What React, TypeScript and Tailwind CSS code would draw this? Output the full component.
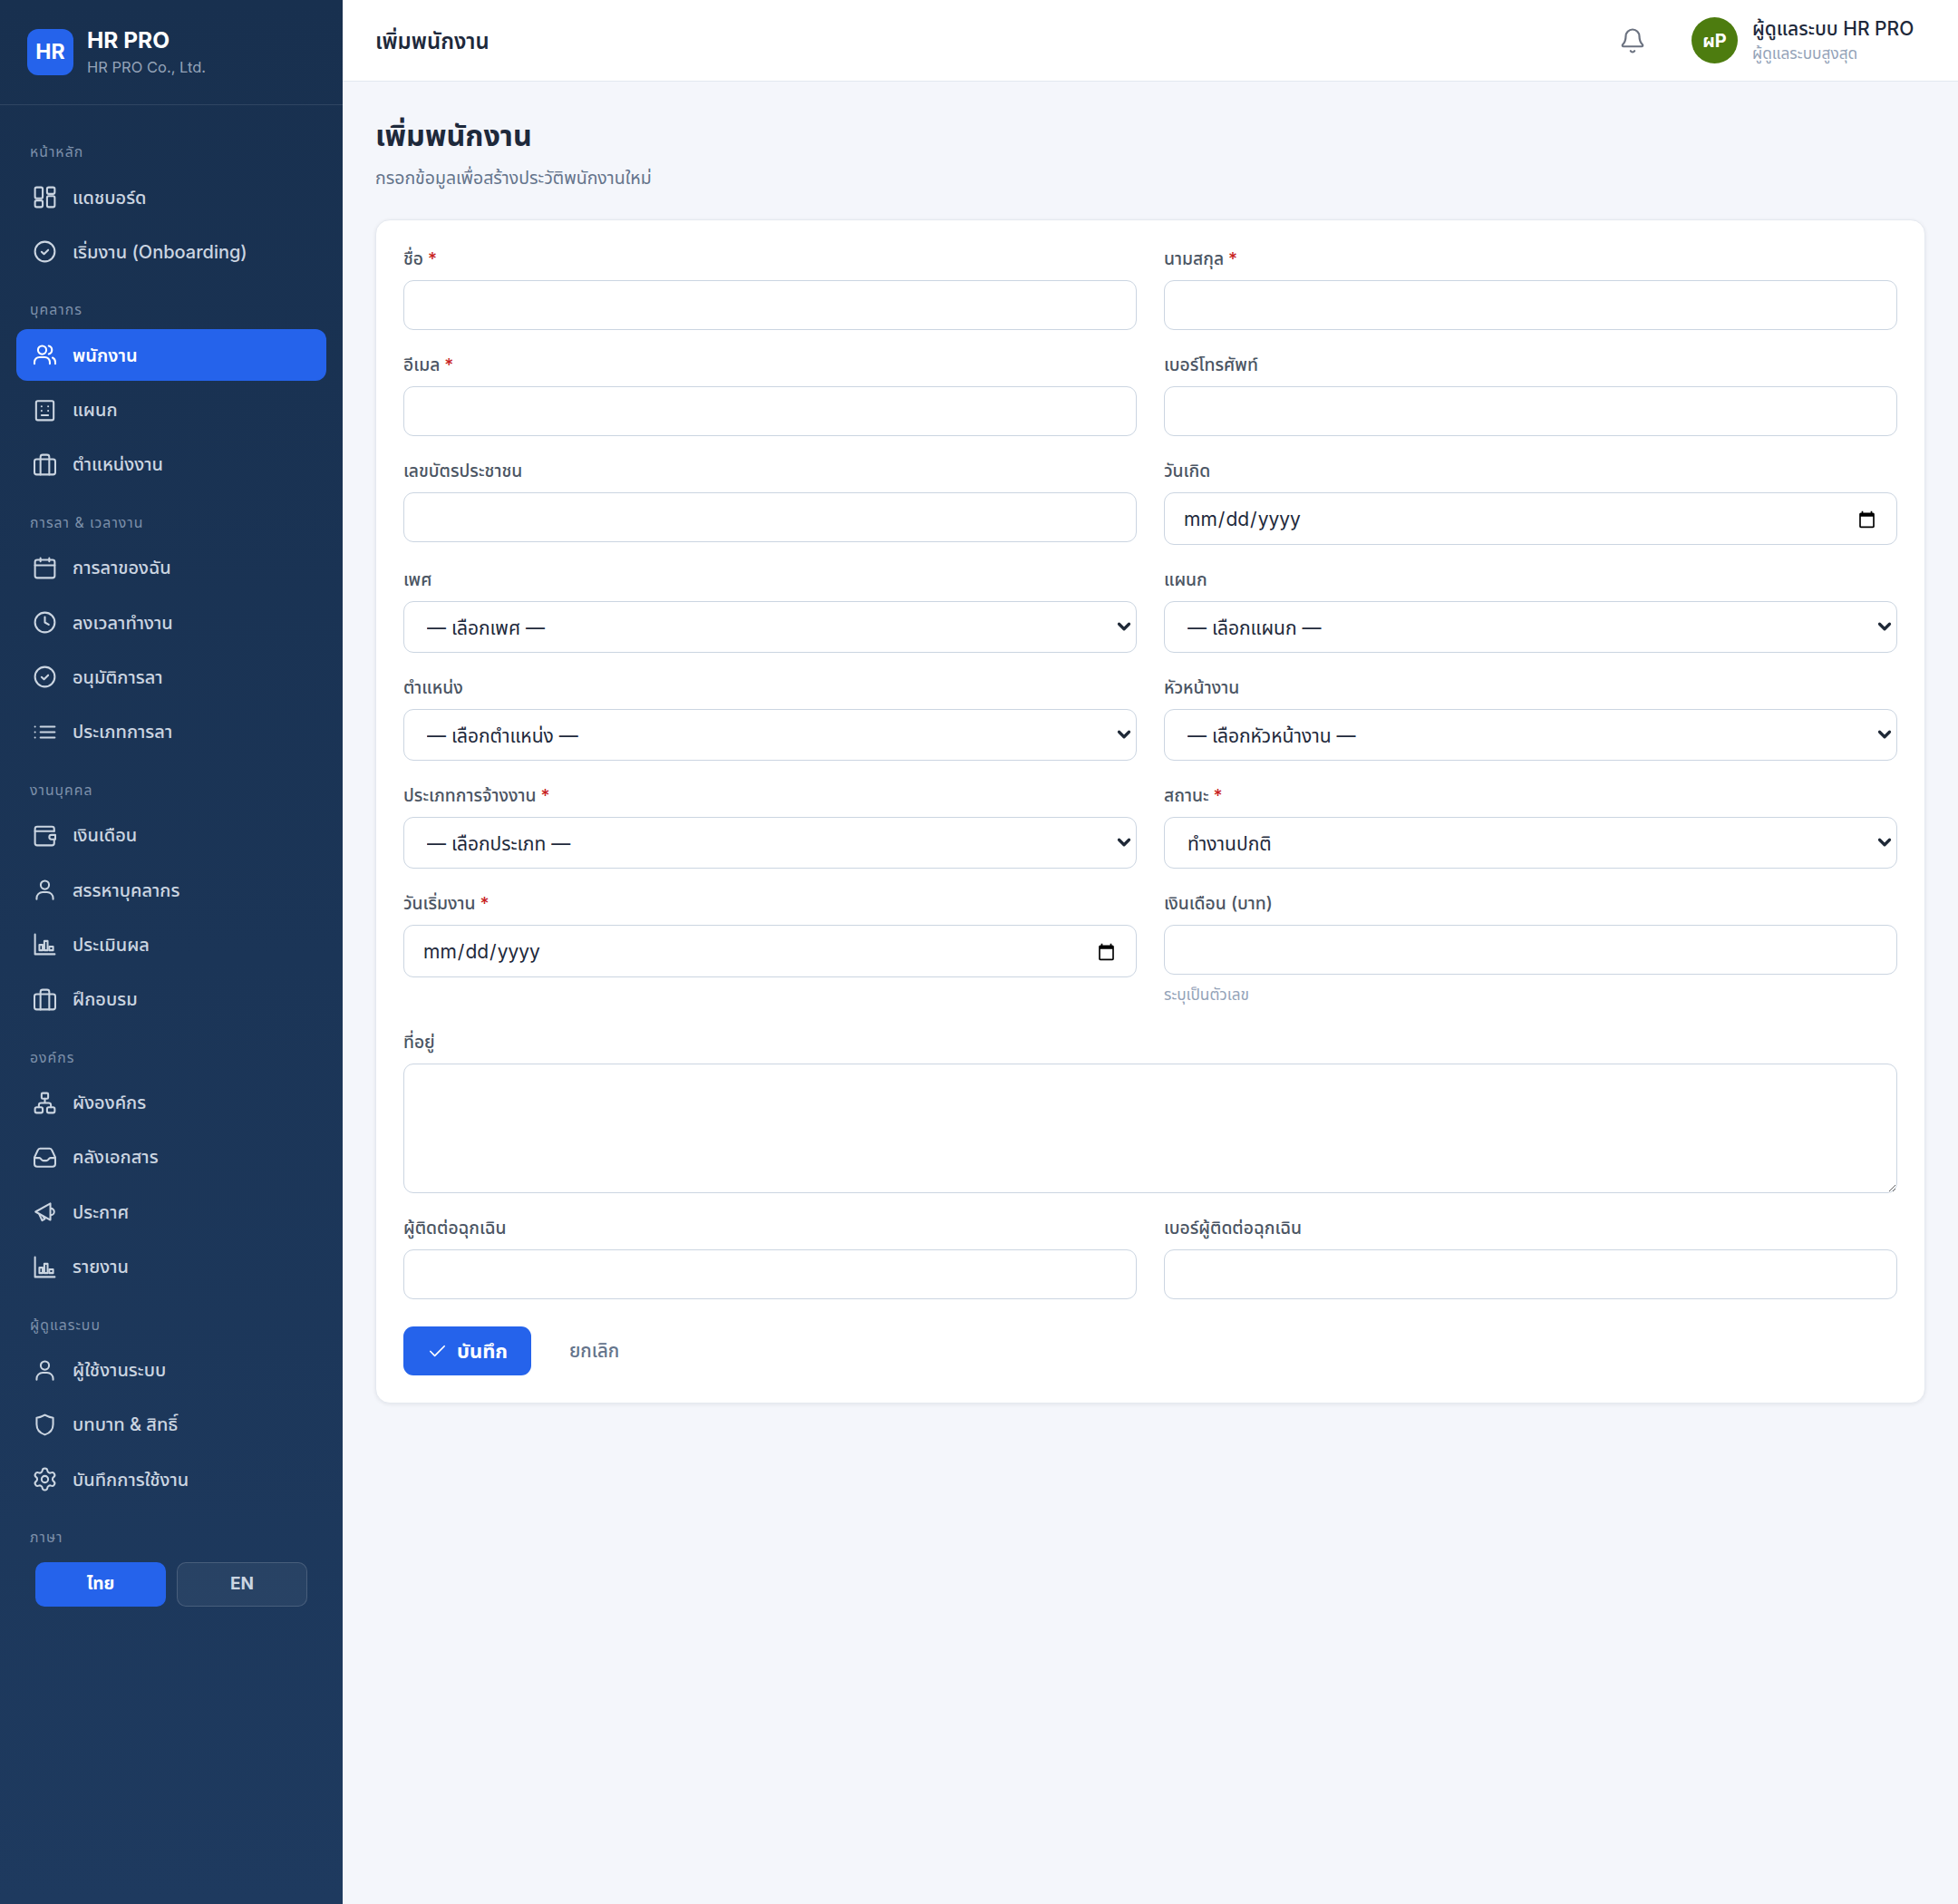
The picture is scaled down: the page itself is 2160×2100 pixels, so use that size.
import type { ReactNode } from "react";
import { Bell, Check, ChevronDown, Settings } from "lucide-react";

function Icon({ children }: { children: ReactNode }) {
  return (
    <svg
      viewBox="0 0 24 24"
      fill="none"
      stroke="currentColor"
      strokeWidth={1.7}
      strokeLinecap="round"
      strokeLinejoin="round"
      className="h-[29px] w-[29px] shrink-0"
    >
      {children}
    </svg>
  );
}

const icons = {
  dashboard: (
    <Icon>
      <rect x="3" y="3" width="7" height="10" rx="1.5" />
      <rect x="14" y="3" width="7" height="6" rx="1.5" />
      <rect x="14" y="11" width="7" height="10" rx="1.5" />
      <rect x="3" y="15" width="7" height="6" rx="1.5" />
    </Icon>
  ),
  check: (
    <Icon>
      <circle cx="12" cy="12" r="9" />
      <path d="M9 12.2l2.2 2.1L15 10.5" />
    </Icon>
  ),
  users: (
    <Icon>
      <circle cx="9.5" cy="7.5" r="3.8" />
      <path d="M2.5 20v-1.500A4.500 4.500 0 0 1 7 14h5a4.500 4.500 0 0 1 4.500 4.500V20" />
      <path d="M15.500 3.800a3.800 3.800 0 0 1 0 7.400" />
      <path d="M21.500 20v-1.500a4.500 4.500 0 0 0-2.500-4" />
    </Icon>
  ),
  building: (
    <Icon>
      <rect x="4" y="3.500" width="16" height="17.500" rx="1.500" />
      <path d="M9 8.500h.01M15 8.500h.01M9 12.500h.01M15 12.500h.01M9 16.500h6" />
    </Icon>
  ),
  briefcase: (
    <Icon>
      <rect x="2.500" y="7" width="19" height="14" rx="2" />
      <path d="M8 21V5a2 2 0 0 1 2-2h4a2 2 0 0 1 2 2v16" />
    </Icon>
  ),
  calendar: (
    <Icon>
      <rect x="3" y="4.500" width="18" height="16.500" rx="2" />
      <path d="M8 3v3M16 3v3M3 9.500h18" />
    </Icon>
  ),
  clock: (
    <Icon>
      <circle cx="12" cy="12" r="9" />
      <path d="M12 7v5l3.500 2" />
    </Icon>
  ),
  list: (
    <Icon>
      <path d="M8 7h13M8 12h13M8 17h13M3 7h.01M3 12h.01M3 17h.01" />
    </Icon>
  ),
  wallet: (
    <Icon>
      <path d="M20.500 8V6a2 2 0 0 0-2-2H5a2 2 0 0 0-2 2v13a2 2 0 0 0 2 2h13.500a2 2 0 0 0 2-2v-3.500" />
      <path d="M3 8h17.500" />
      <path d="M21.500 11.500H18a2 2 0 0 0 0 4h3.500z" />
    </Icon>
  ),
  user: (
    <Icon>
      <circle cx="12" cy="7.500" r="3.800" />
      <path d="M4.500 20.500v-1A5.500 5.500 0 0 1 10 14h4a5.500 5.500 0 0 1 5.500 5.500v1" />
    </Icon>
  ),
  chart: (
    <Icon>
      <path d="M3 3v18h18" />
      <rect x="7" y="12.500" width="3" height="5" />
      <rect x="11.500" y="9" width="3" height="8.500" />
      <rect x="16" y="14" width="3.500" height="3.500" />
    </Icon>
  ),
  org: (
    <Icon>
      <rect x="9" y="3" width="6" height="5" rx="1" />
      <rect x="3" y="16" width="7" height="5" rx="1.500" />
      <rect x="14" y="16" width="7" height="5" rx="1.500" />
      <path d="M12 8v4M6.500 16v-2a2 2 0 0 1 2-2h7a2 2 0 0 1 2 2v2" />
    </Icon>
  ),
  inbox: (
    <Icon>
      <path d="M5.500 5.600 2.500 12v6a2.500 2.500 0 0 0 2.500 2.500h14a2.500 2.500 0 0 0 2.500-2.500v-6l-3-6.400A2.500 2.500 0 0 0 16.300 4H7.700a2.500 2.500 0 0 0-2.200 1.600z" />
      <path d="M2.500 12.500H7c1.500 0 1.500 2.500 3.500 2.500h3c2 0 2-2.500 3.500-2.500h4.500" />
    </Icon>
  ),
  megaphone: (
    <Icon>
      <path d="M3.500 12 17 4.500v15z" />
      <path d="M7 14.500 9.500 20l2.500-1.500-1.600-2.200" />
      <path d="M17.500 9a3 3 0 0 1 0 6" />
    </Icon>
  ),
  shield: (
    <Icon>
      <path d="M12 3c2.500 1.500 5 2.200 7.500 2.500v6c0 4.500-3 8-7.500 9.500-4.500-1.500-7.500-5-7.500-9.500v-6C7 5.200 9.500 4.500 12 3z" />
    </Icon>
  ),
  settings: <Settings className="h-[29px] w-[29px] shrink-0" strokeWidth={1.7} />,
};

const sections: { title: string; items: { label: string; icon: ReactNode; active?: boolean }[] }[] = [
  {
    title: "หน้าหลัก",
    items: [
      { label: "แดชบอร์ด", icon: icons.dashboard },
      { label: "เริ่มงาน (Onboarding)", icon: icons.check },
    ],
  },
  {
    title: "บุคลากร",
    items: [
      { label: "พนักงาน", icon: icons.users, active: true },
      { label: "แผนก", icon: icons.building },
      { label: "ตำแหน่งงาน", icon: icons.briefcase },
    ],
  },
  {
    title: "การลา & เวลางาน",
    items: [
      { label: "การลาของฉัน", icon: icons.calendar },
      { label: "ลงเวลาทำงาน", icon: icons.clock },
      { label: "อนุมัติการลา", icon: icons.check },
      { label: "ประเภทการลา", icon: icons.list },
    ],
  },
  {
    title: "งานบุคคล",
    items: [
      { label: "เงินเดือน", icon: icons.wallet },
      { label: "สรรหาบุคลากร", icon: icons.user },
      { label: "ประเมินผล", icon: icons.chart },
      { label: "ฝึกอบรม", icon: icons.briefcase },
    ],
  },
  {
    title: "องค์กร",
    items: [
      { label: "ผังองค์กร", icon: icons.org },
      { label: "คลังเอกสาร", icon: icons.inbox },
      { label: "ประกาศ", icon: icons.megaphone },
      { label: "รายงาน", icon: icons.chart },
    ],
  },
  {
    title: "ผู้ดูแลระบบ",
    items: [
      { label: "ผู้ใช้งานระบบ", icon: icons.user },
      { label: "บทบาท & สิทธิ์", icon: icons.shield },
      { label: "บันทึกการใช้งาน", icon: icons.settings },
    ],
  },
];

function SectionLabel({ children }: { children: ReactNode }) {
  return (
    <div className="mb-[11px] h-[20px] pl-[15px] text-[15.8px] leading-[20px] tracking-[1px] text-[#7d90aa]">
      {children}
    </div>
  );
}

function Sidebar() {
  return (
    <aside className="w-[378px] shrink-0 bg-gradient-to-b from-[#18304f] to-[#1e3a5f]">
      <div className="flex h-[116px] items-center gap-[15px] border-b border-white/10 pl-[30px]">
        <div className="flex h-[51px] w-[51px] items-center justify-center rounded-[12px] bg-[#2563eb] text-[23px] font-bold text-white">
          HR
        </div>
        <div>
          <div className="text-[24.5px] leading-[30px] font-bold text-white">HR PRO</div>
          <div className="mt-[3px] text-[16.5px] leading-[24px] text-[#94a3b8]">HR PRO Co., Ltd.</div>
        </div>
      </div>
      <nav className="px-[18px] pt-[42px]">
        {sections.map((s) => (
          <div key={s.title} className="mb-[26px]">
            <SectionLabel>{s.title}</SectionLabel>
            {s.items.map((item) => (
              <a
                key={item.label}
                className={
                  item.active
                    ? "mb-[3.3px] flex h-[57px] items-center gap-[16px] rounded-[12px] bg-[#2563eb] pl-[17px] text-[20px] font-semibold text-white"
                    : "mb-[3.3px] flex h-[57px] items-center gap-[16px] rounded-[12px] pl-[17px] text-[20px] font-medium text-[#cbd5e1]"
                }
              >
                {item.icon}
                <span>{item.label}</span>
              </a>
            ))}
          </div>
        ))}
        <SectionLabel>ภาษา</SectionLabel>
        <div className="flex gap-[12px] pl-[21px] pt-[6px]">
          <button className="h-[49px] w-[144px] rounded-[10px] bg-[#2563eb] text-[19px] font-bold text-white">
            ไทย
          </button>
          <button className="h-[49px] w-[144px] rounded-[10px] border-[1.5px] border-white/15 bg-white/5 text-[19px] font-bold text-[#cbd5e1]">
            EN
          </button>
        </div>
      </nav>
    </aside>
  );
}

function Field({ label, required, children }: { label: string; required?: boolean; children: ReactNode }) {
  return (
    <div>
      <label className="block h-[36px] text-[19.3px] leading-[24px] font-medium text-[#4b5563]">
        {label}
        {required && <span className="ml-[5px] text-[#c81e1e]">*</span>}
      </label>
      {children}
    </div>
  );
}

const inputCls =
  "block h-[55px] w-full rounded-[11px] border-[1.5px] border-[#cbd5e1] bg-white px-[20px] text-[21px] text-[#1e293b] outline-none";
const dateCls =
  "block h-[58px] w-full rounded-[11px] border-[1.5px] border-[#cbd5e1] bg-white px-[20px] pt-[2px] text-[21px] text-[#1e293b] outline-none";

function Choice({ options }: { options: string[] }) {
  return (
    <div className="relative">
      <select className="block h-[57px] w-full appearance-none rounded-[11px] border-[1.5px] border-[#cbd5e1] bg-white pl-[25px] pr-[40px] pt-[2px] text-[21px] text-[#1e293b] outline-none">
        {options.map((o) => (
          <option key={o}>{o}</option>
        ))}
      </select>
      <ChevronDown
        className="pointer-events-none absolute right-[3px] top-[17px] h-[22px] w-[22px] text-[#1f2937]"
        strokeWidth={3.5}
      />
    </div>
  );
}

function EmployeeForm() {
  return (
    <div className="rounded-[16px] border border-[#e5e9f0] bg-white p-[30px] shadow-[0_1px_4px_rgba(15,23,42,0.08)]">
      <div className="grid grid-cols-2 gap-x-[30px] gap-y-[26px]">
        <Field label="ชื่อ" required>
          <input className={inputCls} />
        </Field>
        <Field label="นามสกุล" required>
          <input className={inputCls} />
        </Field>
        <Field label="อีเมล" required>
          <input type="email" className={inputCls} />
        </Field>
        <Field label="เบอร์โทรศัพท์">
          <input className={inputCls} />
        </Field>
        <Field label="เลขบัตรประชาชน">
          <input className={inputCls} />
        </Field>
        <Field label="วันเกิด">
          <input type="date" className={dateCls} />
        </Field>
        <Field label="เพศ">
          <Choice options={["— เลือกเพศ —"]} />
        </Field>
        <Field label="แผนก">
          <Choice options={["— เลือกแผนก —"]} />
        </Field>
        <Field label="ตำแหน่ง">
          <Choice options={["— เลือกตำแหน่ง —"]} />
        </Field>
        <Field label="หัวหน้างาน">
          <Choice options={["— เลือกหัวหน้างาน —"]} />
        </Field>
        <Field label="ประเภทการจ้างงาน" required>
          <Choice options={["— เลือกประเภท —"]} />
        </Field>
        <Field label="สถานะ" required>
          <Choice options={["ทำงานปกติ"]} />
        </Field>
        <Field label="วันเริ่มงาน" required>
          <input type="date" className={dateCls} />
        </Field>
        <Field label="เงินเดือน (บาท)">
          <input className={inputCls} />
          <p className="mb-[2px] mt-[10px] text-[17.2px] leading-[24px] text-[#94a3b8]">ระบุเป็นตัวเลข</p>
        </Field>
        <div className="col-span-2">
          <Field label="ที่อยู่">
            <textarea className="block h-[143px] w-full rounded-[11px] border-[1.5px] border-[#cbd5e1] bg-white px-[20px] py-[12px] text-[21px] outline-none" />
          </Field>
        </div>
        <Field label="ผู้ติดต่อฉุกเฉิน">
          <input className={inputCls} />
        </Field>
        <Field label="เบอร์ผู้ติดต่อฉุกเฉิน">
          <input className={inputCls} />
        </Field>
      </div>
      <div className="mt-[30px] flex items-center gap-[42px]">
        <button className="flex h-[54px] w-[141px] items-center justify-center gap-[10px] rounded-[11px] bg-[#2563eb] text-[22px] font-bold text-white">
          <Check className="h-[23px] w-[23px]" strokeWidth={1.75} />
          บันทึก
        </button>
        <a className="text-[20.5px] font-medium text-[#64748b]">ยกเลิก</a>
      </div>
    </div>
  );
}

export default function App() {
  return (
    <div className="flex min-h-[2100px] bg-[#f4f6fb] [font-family:Inter,'Noto_Sans_Thai',sans-serif]">
      <Sidebar />
      <main className="min-w-0 flex-1">
        <header className="flex h-[90px] items-center border-b-[1.5px] border-[#e2e8f0] bg-white pl-[36px] pr-[36px]">
          <h2 className="pt-[2px] text-[24px] font-semibold text-[#1e293b]">เพิ่มพนักงาน</h2>
          <div className="ml-auto flex items-center">
            <Bell className="mr-[50px] h-[30px] w-[30px] text-[#6b7280]" strokeWidth={1.75} />
            <div className="mr-[16px] flex h-[51px] w-[51px] items-center justify-center rounded-full bg-[#4d7c0f] text-[20px] font-bold text-white">
              ผP
            </div>
            <div className="w-[191px] whitespace-nowrap pb-[2px]">
              <div className="text-[21px] leading-[30px] font-medium text-[#1e293b]">ผู้ดูแลระบบ HR PRO</div>
              <div className="text-[17.3px] leading-[24px] text-[#94a3b8]">ผู้ดูแลระบบสูงสุด</div>
            </div>
          </div>
        </header>
        <div className="pl-[36px] pr-[36px] pt-[35px]">
          <h1 className="text-[32.3px] leading-[50px] font-bold text-[#1e293b]">เพิ่มพนักงาน</h1>
          <p className="mb-[32px] mt-[7px] text-[19.5px] leading-[28px] text-[#64748b]">
            กรอกข้อมูลเพื่อสร้างประวัติพนักงานใหม่
          </p>
          <EmployeeForm />
        </div>
      </main>
    </div>
  );
}
